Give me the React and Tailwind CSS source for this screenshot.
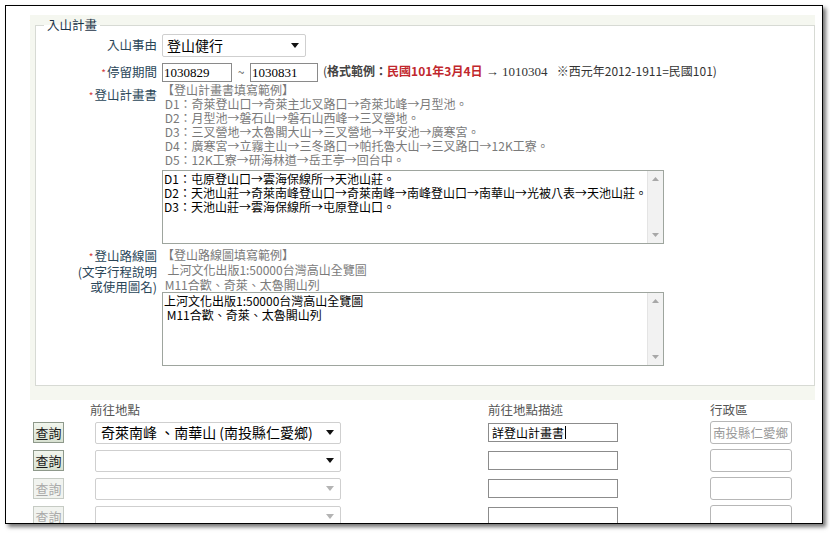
import React from 'react';

const Arrow = ({ disabled = false }) => (
    <svg width="8" height="5" viewBox="0 0 8 5">
        <path d="M0 0h8L4 5z" fill={disabled ? '#b4b4b4' : '#111'} />
    </svg>
);

const ScrollBar = () => (
    <div className="w-[16px] shrink-0 bg-[#f2f2f2] border-l border-[#e4e4e4] flex flex-col justify-between items-center py-[6px]">
        <svg width="7" height="4" viewBox="0 0 7 4">
            <path d="M0 4h7L3.5 0z" fill="#a8a8a8" />
        </svg>
        <svg width="7" height="4" viewBox="0 0 7 4">
            <path d="M0 0h7L3.5 4z" fill="#a8a8a8" />
        </svg>
    </div>
);

const TextBox = ({ lines }) => (
    <div className="ml-[0px] w-[502px] h-[74px] border border-[#9ea59e] bg-white flex">
        <div className="flex-1 pt-[1px] pl-[1px] text-[12px] leading-[14px] text-black whitespace-pre">
            {lines.map((l, i) => (
                <div key={i}>{l}</div>
            ))}
        </div>
        <ScrollBar />
    </div>
);

const Label = ({ req, children, className = '' }) => (
    <div className={`w-[121px] shrink-0 text-right text-[12.5px] text-[#2a4658] ${className}`}>
        {req && <span className="text-[#d23c3c] text-[10px] mr-[1px]">*</span>}
        {children}
    </div>
);

const QueryButton = ({ disabled = false }) => (
    <div
        className={
            disabled
                ? 'w-[31px] h-[21px] flex items-center justify-center border border-[#c6cbc4] bg-[#f1f3ef] text-[13px] text-[#a9a9a9]'
                : 'w-[31px] h-[21px] flex items-center justify-center border border-[#8e998b] bg-gradient-to-b from-[#f1f5ed] to-[#d8e1d1] text-[13px] text-[#1a1a1a]'
        }
    >
        查詢
    </div>
);

const PlaceSelect = ({ text = '', disabled = false }) => (
    <div className="w-[246px] h-[22px] border border-[#cfcfcf] rounded-[2px] bg-white flex items-center justify-between pl-[5px] pr-[6px]">
        <span className="text-[14px] text-black whitespace-nowrap">{text}</span>
        <Arrow disabled={disabled} />
    </div>
);

const planExample = [
    '【登山計畫書填寫範例】',
    ' D1：奇萊登山口→奇萊主北叉路口→奇萊北峰→月型池。',
    ' D2：月型池→磐石山→磐石山西峰→三叉營地。',
    ' D3：三叉營地→太魯閣大山→三叉營地→平安池→廣寒宮。',
    ' D4：廣寒宮→立霧主山→三冬路口→帕托魯大山→三叉路口→12K工寮。',
    ' D5：12K工寮→研海林道→岳王亭→回台中。',
];

const planText = [
    'D1：屯原登山口→雲海保線所→天池山莊。',
    'D2：天池山莊→奇萊南峰登山口→奇萊南峰→南峰登山口→南華山→光被八表→天池山莊。',
    'D3：天池山莊→雲海保線所→屯原登山口。',
];

const mapExample = ['【登山路線圖填寫範例】', '  上河文化出版1:50000台灣高山全覽圖', ' M11合歡、奇萊、太魯閣山列'];

const mapText = ['上河文化出版1:50000台灣高山全覽圖', ' M11合歡、奇萊、太魯閣山列'];

const rows = [
    { text: '奇萊南峰 、南華山 (南投縣仁愛鄉)', desc: '詳登山計畫書', area: '南投縣仁愛鄉', disabled: false },
    { text: '', desc: '', area: '', disabled: false },
    { text: '', desc: '', area: '', disabled: true },
    { text: '', desc: '', area: '', disabled: true },
];

export default function App() {
    return (
        <div className="w-[830px] h-[535px] bg-white pt-[5px] pl-[5px] font-['Noto_Sans_CJK_TC','Noto_Sans',sans-serif]">
            <div className="w-[818px] h-[519px] border border-black bg-white shadow-[3px_3px_4px_rgba(0,0,0,0.55)] overflow-hidden">
                {/* 入山計畫 */}
                <div className="ml-[24px] mt-[9px] w-[785px] bg-[#f5f7f0] pt-[2px] pb-[14px]">
                    <fieldset className="ml-[5px] w-[780px] border border-[#d7dad4] bg-white pb-[19px]">
                        <legend className="ml-[8px] px-[3px] text-[12.5px] leading-[16px] text-[#1c3448]">入山計畫</legend>

                        <div className="flex items-center mt-[1px] h-[23px]">
                            <Label>入山事由</Label>
                            <div className="ml-[5px] w-[144px] h-[23px] border border-[#cfcfcf] rounded-[2px] bg-white flex items-center justify-between pl-[4px] pr-[6px]">
                                <span className="text-[14px] text-black">登山健行</span>
                                <Arrow />
                            </div>
                        </div>

                        <div className="flex items-center mt-[5px] h-[20px]">
                            <Label req>停留期間</Label>
                            <div className="ml-[5px] flex items-center">
                                <div className="w-[70px] h-[19px] border border-[#8a8a8a] bg-white pl-[1px] text-[13px] leading-[17px] font-['Liberation_Serif',serif] text-black">
                                    1030829
                                </div>
                                <span className="w-[18px] text-center text-[12px] text-[#555]">~</span>
                                <div className="w-[68px] h-[19px] border border-[#8a8a8a] bg-white pl-[1px] text-[13px] leading-[17px] font-['Liberation_Serif',serif] text-black">
                                    1030831
                                </div>
                                <div className="ml-[5px] text-[12px] text-[#333] whitespace-nowrap">
                                    (<span className="font-bold text-[#444]">格式範例：</span>
                                    <span className="font-bold text-[#c1272d]">民國101年3月4日</span>
                                    <span className="font-['Liberation_Serif',serif] text-[13px]"> → 1010304 </span>
                                    <span className="ml-[6px]">※西元年2012-1911=民國101)</span>
                                </div>
                            </div>
                        </div>

                        <div className="flex mt-[1px]">
                            <Label req className="pt-[4px] leading-[16px]">登山計畫書</Label>
                            <div className="ml-[5px]">
                                <div className="text-[12px] leading-[14px] text-[#7a7a7a] whitespace-pre">
                                    {planExample.map((l, i) => (
                                        <div key={i}>{l}</div>
                                    ))}
                                </div>
                                <div className="mt-[3px]">
                                    <TextBox lines={planText} />
                                </div>
                            </div>
                        </div>

                        <div className="flex mt-[3px]">
                            <Label className="leading-[15px] pt-[1px]">
                                <span className="text-[#d23c3c] text-[10px] mr-[1px]">*</span>登山路線圖
                                <br />
                                (文字行程說明
                                <br />
                                或使用圖名)
                            </Label>
                            <div className="ml-[5px]">
                                <div className="text-[12px] leading-[15px] text-[#7a7a7a] whitespace-pre">
                                    {mapExample.map((l, i) => (
                                        <div key={i}>{l}</div>
                                    ))}
                                </div>
                                <TextBox lines={mapText} />
                            </div>
                        </div>
                    </fieldset>
                </div>

                {/* 前往地點 */}
                <div className="ml-[27px] mt-[2px]">
                    <div className="grid grid-cols-[62px_393px_222px_82px] text-[12.5px] leading-[16px] text-[#555]">
                        <div />
                        <div className="-ml-[5px]">前往地點</div>
                        <div>前往地點描述</div>
                        <div>行政區</div>
                    </div>
                    <div className="mt-[3px] flex flex-col gap-[6px]">
                        {rows.map((r, i) => (
                            <div key={i} className="grid grid-cols-[62px_393px_222px_82px] items-center h-[22px]">
                                <QueryButton disabled={r.disabled} />
                                <PlaceSelect text={r.text} disabled={r.disabled} />
                                <div className="w-[130px] h-[19px] border border-[#8c8c8c] bg-white pl-[3px] text-[12px] leading-[17px] text-black flex items-center">
                                    {r.desc}
                                    {r.desc && <span className="ml-[1px] w-[1px] h-[13px] bg-black" />}
                                </div>
                                <div className="w-[82px] h-[23px] border border-[#b7b7b7] rounded-[3px] bg-white pl-[2px] text-[12.5px] leading-[21px] text-[#9a9a9a] overflow-hidden whitespace-nowrap">
                                    {r.area}
                                </div>
                            </div>
                        ))}
                    </div>
                </div>
            </div>
        </div>
    );
}
